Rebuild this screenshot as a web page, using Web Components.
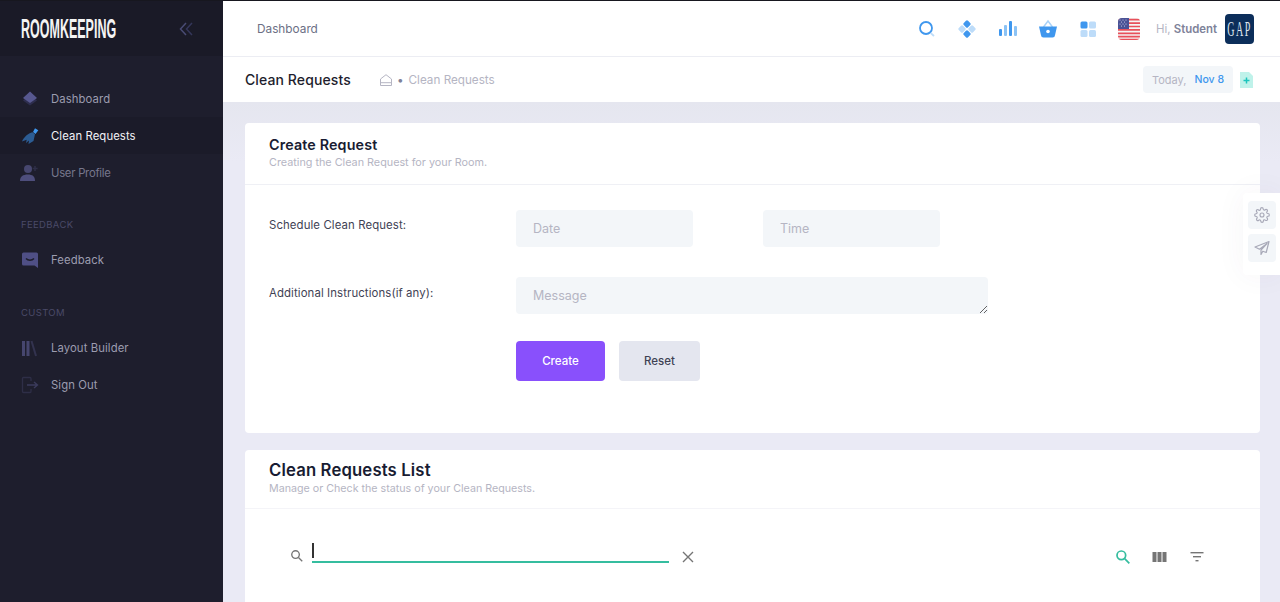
<!DOCTYPE html>
<html lang="en"><head><meta charset="utf-8"><title>Roomkeeping</title>
<style>
html,body{margin:0;height:602px;overflow:hidden;background:#e9e9f4}
body{font-family:"Inter","Open Sans",sans-serif;font-size:13px}
</style></head><body>
<rk-app>
  <rk-sidebar slot="side">
    <rk-nav-item label="Dashboard" icon="dash"></rk-nav-item>
    <rk-nav-item label="Clean Requests" icon="brush" active></rk-nav-item>
    <rk-nav-item label="User Profile" icon="user" dim style="letter-spacing:-.25px"></rk-nav-item>
    <rk-nav-section>FEEDBACK</rk-nav-section>
    <rk-nav-item label="Feedback" icon="chat"></rk-nav-item>
    <rk-nav-section style="padding-top:26px">CUSTOM</rk-nav-section>
    <rk-nav-item label="Layout Builder" icon="layout"></rk-nav-item>
    <rk-nav-item label="Sign Out" icon="out"></rk-nav-item>
  </rk-sidebar>
  <rk-topbar slot="top"></rk-topbar>
  <rk-subheader slot="top"></rk-subheader>
  <rk-card title="Create Request" sub="Creating the Clean Request for your Room." style="height:310px">
    <rk-form></rk-form>
  </rk-card>
  <rk-card title="Clean Requests List" sub="Manage or Check the status of your Clean Requests." big>
    <rk-table-toolbar></rk-table-toolbar>
  </rk-card>
  <rk-side-tools slot="over"></rk-side-tools>
</rk-app>
<script>
const F='"Inter","Open Sans",sans-serif';
function def(name,html,init){
  customElements.define(name,class extends HTMLElement{
    connectedCallback(){
      if(this.shadowRoot)return;
      const r=this.attachShadow({mode:'open'});
      r.innerHTML=typeof html==='function'?html(this):html;
      if(init)init(this,r);
    }
  });
}
def('rk-app',`<style>
:host{display:grid;grid-template-columns:223px 1fr;height:601px;border-top:1px solid #17171f;overflow:hidden;font-family:${F}}
.side{min-height:0}
.main{display:flex;flex-direction:column;min-width:0;overflow:hidden}
.content{flex:1;display:flex;flex-direction:column;gap:17px;padding:21px 20px 0 22px;background:linear-gradient(#e5e6ef,#eaeaf5 60px)}
</style>
<div class="side"><slot name="side"></slot></div>
<div class="main"><slot name="top"></slot><div class="content"><slot></slot></div></div>
<slot name="over"></slot>`);

def('rk-sidebar',`<style>
:host{display:block;height:100%;background:#1e1e2d;color:#a2a3b7}
.brand{height:55px;background:#1a1a27;display:flex;align-items:center;justify-content:space-between;padding:1px 30px 0 21px;box-sizing:border-box}
.logo{font:700 27px/1 "Liberation Sans",sans-serif;color:#f4f4f4;display:inline-block;transform:scale(.463,1.04);transform-origin:left center;width:95px;white-space:nowrap}
nav{padding-top:24px;display:block}
svg{flex:none}
</style>
<div class="brand"><span class="logo">ROOMKEEPING</span>
<svg width="14" height="14" viewBox="0 0 14 14" fill="none" stroke-width="1.5"><path d="M7 1 1.500 7 7 13" stroke="#494b74"/><path d="M13 1 7.500 7 13 13" stroke="#34365a"/></svg></div>
<nav><slot></slot></nav>`);

const icons={
dash:`<svg width="18" height="18" viewBox="0 0 18 18"><path d="M9 4.500 16 10.500 9 15.500 2 10.500Z" fill="#2e2e4e"/><path d="M9 1.500 16 8 9 13 2 8Z" fill="#57588f"/></svg>`,
brush:`<svg width="18" height="18" viewBox="0 0 18 18"><path d="M14 1.200 17.300 3.200 14.500 7 12 5Z" fill="#3f97ee"/><path d="M11.500 5.300 14 7.300 12.500 14 7.500 17 8 13.500 5 16 5.700 12.800 1 14.500C3 10 7 6.500 11.500 5.300Z" fill="#2c5c93"/></svg>`,
user:`<svg width="20" height="18" viewBox="0 0 20 18" style="margin-left:-2px"><circle cx="9" cy="5" r="4" fill="#47476f"/><path d="M1 17C1 12.500 4 10.500 8.800 10.500S16 12.500 16 17Z" fill="#4e4e7c"/><path d="M16 2v5M13.600 4.500h5" stroke="#2e2e47" stroke-width="1.600"/></svg>`,
chat:`<svg width="18" height="18" viewBox="0 0 18 18"><path d="M2.500 1.500h13a1.500 1.500 0 0 1 1.500 1.500v14l-3.500-2.500H2.500A1.500 1.500 0 0 1 1 13V3a1.500 1.500 0 0 1 1.500-1.500Z" fill="#4f4f85"/><path d="M5 7.500c2 2.300 6 2.300 8 0" stroke="#1e1e2d" stroke-width="1.400" fill="none"/></svg>`,
layout:`<svg width="18" height="18" viewBox="0 0 18 18"><rect x="1" y="2" width="3" height="15" fill="#46466e"/><rect x="5.500" y="2" width="3" height="15" fill="#46466e"/><path d="M10.500 2 15 17" stroke="#33334f" stroke-width="2"/></svg>`,
out:`<svg width="18" height="18" viewBox="0 0 18 18" fill="none"><path d="M10 5V2.500A1 1 0 0 0 9 1.500H2.500A1 1 0 0 0 1.500 2.500V15.500A1 1 0 0 0 2.500 16.500H9A1 1 0 0 0 10 15.500V13" stroke="#2e2e47" stroke-width="1.300"/><path d="M6 9H16M13 6l3.500 3-3.500 3" stroke="#3b3b5c" stroke-width="1.400"/></svg>`};

def('rk-nav-item',h=>`<style>
:host{display:flex;align-items:center;height:37px;padding-left:21px;font-size:11.300px;color:#9c9caf;letter-spacing:.1px}
:host([active]){background:#1b1b29;color:#f2f2f6}
:host([dim]){color:#77778c}
.i{width:30px;display:flex;align-items:center;line-height:0}
</style><span class="i">${icons[h.getAttribute('icon')]}</span><span>${h.getAttribute('label')}</span>`);

def('rk-nav-section',`<style>
:host{display:flex;align-items:center;height:16px;padding:25px 0 0 21px;margin-bottom:9px;font-size:9.500px;letter-spacing:.35px;color:#4a4a68}
</style><slot></slot>`);

const tb=(s)=>`<span class="tb">${s}</span>`;
def('rk-topbar',`<style>
:host{flex:none;display:flex;align-items:center;height:56px;box-sizing:border-box;background:#fff;border-bottom:1px solid #ecedf3;padding:0 26px 0 34px;color:#6c6f85;font-size:11.800px}
.sp{flex:1}
.tb{display:flex;justify-content:center;align-items:center;width:40.400px;line-height:0}
.hi{font-size:11.400px;color:#b5b5c3;margin:0 8px 0 7px}.hi b{color:#7e8299;font-weight:600}
.av{width:29px;height:30px;border-radius:4px;background:#0c2e5a;color:#dfe6ee;display:flex;align-items:center;justify-content:center;font:400 20px/1 "Liberation Serif",serif;letter-spacing:3px;overflow:hidden}
.av span{display:inline-block;transform:scaleX(.5)}
</style>
<span>Dashboard</span><span class="sp"></span>
${tb(`<svg width="18" height="18" viewBox="0 0 18 18" fill="none"><circle cx="8" cy="8" r="6" stroke="#3f97ee" stroke-width="1.800"/><path d="M12.500 12.800 16 16" stroke="#bddcf9" stroke-width="1.800"/></svg>`)}
${tb(`<svg width="18" height="18" viewBox="0 0 18 18"><rect x="6" y="1" width="6" height="6" rx="1.500" transform="rotate(45 9 4)" fill="#3f97ee"/><rect x="6" y="11" width="6" height="6" rx="1.500" transform="rotate(45 9 14)" fill="#3f97ee"/><rect x="1" y="6" width="6" height="6" rx="1.500" transform="rotate(45 4 9)" fill="#bddcf9"/><rect x="11" y="6" width="6" height="6" rx="1.500" transform="rotate(45 14 9)" fill="#bddcf9"/></svg>`)}
${tb(`<svg width="18" height="18" viewBox="0 0 18 18"><rect x="0" y="9" width="3" height="7" rx="1" fill="#3f97ee"/><rect x="5" y="5" width="3" height="11" rx="1" fill="#8cc3f5"/><rect x="10" y="1" width="3" height="15" rx="1" fill="#3f97ee"/><rect x="15" y="6" width="3" height="10" rx="1" fill="#8cc3f5"/></svg>`)}
${tb(`<svg width="20" height="20" viewBox="0 0 20 20"><path d="M5.500 8 10 2 14.500 8" fill="none" stroke="#a9d2f8" stroke-width="1.500"/><path d="M1 7.500h18l-2 8.700a2.500 2.500 0 0 1-2.400 2.300H5.400A2.500 2.500 0 0 1 3 16.200Z" fill="#3f97ee"/><circle cx="10" cy="12.500" r="1.800" fill="#fff"/></svg>`)}
${tb(`<svg width="16" height="16" viewBox="0 0 16 16"><rect x="0.500" y="0.500" width="7" height="7" rx="1.500" fill="#3f97ee"/><rect x="9" y="0.500" width="7" height="7" rx="1.500" fill="#bddcf9"/><rect x="0.500" y="9" width="7" height="7" rx="1.500" fill="#bddcf9"/><rect x="9" y="9" width="7" height="7" rx="1.500" fill="#bddcf9"/></svg>`)}
${tb(`<svg width="22" height="22" viewBox="0 0 22 22"><defs><clipPath id="f"><rect width="22" height="22" rx="4"/></clipPath></defs><g clip-path="url(#f)"><rect width="22" height="22" fill="#f5f5f5"/><path d="M0 1.700h22M0 5.100h22M0 8.500h22M0 11.900h22M0 15.300h22M0 18.700h22" stroke="#e8505b" stroke-width="1.700"/><path d="M0 21.500h22" stroke="#e8505b" stroke-width="1.500"/><rect width="11" height="11" fill="#4a5296"/><path d="M2 2h.01M5 2h.01M8 2h.01M3.500 4h.01M6.500 4h.01M2 6h.01M5 6h.01M8 6h.01M3.500 8h.01M6.500 8h.01" stroke="#cfd2ea" stroke-width="1.200" stroke-linecap="round"/></g></svg>`)}
<span class="hi">Hi, <b>Student</b></span>
<span class="av"><span>GAP</span></span>`);

def('rk-subheader',`<style>
:host{flex:none;display:flex;align-items:center;height:45px;box-sizing:border-box;background:#fff;padding:0 27px 0 22px;color:#b5b5c3}
h2{margin:0;font-size:14px;font-weight:500;color:#1e1e2d;width:135px;letter-spacing:.1px}
.crumb{display:flex;align-items:center;gap:5px;font-size:11.700px}
.sp{flex:1}
.today{display:flex;gap:8px;align-items:center;height:27px;padding:0 9px;background:#f3f6f9;border-radius:4px;font-size:11px;color:#b5b5c3;margin-right:7px}
.today b{font-weight:500;font-size:10.500px;color:#3f97ee}
svg{display:block}
</style>
<h2>Clean Requests</h2>
<span class="crumb"><svg width="12" height="12" viewBox="0 0 12 12" fill="none" stroke="#b5b5c3"><path d="M.5 11.500V5L6 .7 11.500 5V11.500ZM.5 8.700H11.500"/></svg><span style="color:#7e8299">•</span><span>Clean Requests</span></span>
<span class="sp"></span>
<span class="today"><span>Today,</span><b>Nov 8</b></span>
<svg width="13" height="16" viewBox="0 0 13 16"><path d="M0 0H9L13 4V16H0Z" fill="#bff2ea"/><path d="M6.500 5.500v6M3.500 8.500h6" stroke="#1bc5bd" stroke-width="1.500"/></svg>`);

def('rk-card',h=>`<style>
:host{display:flex;flex-direction:column;background:#fff;border-radius:4px;box-sizing:border-box;flex:none}
header{height:62px;box-sizing:border-box;border-bottom:1px solid #eff0f5;padding:13px 24px 0}
:host([big]) header{height:59px;padding-top:11px;border-bottom-color:#f4f4f8}
h3{margin:0;font-size:14.300px;line-height:17px;font-weight:600;color:#181c32;letter-spacing:.15px}
:host([big]) h3{font-size:16.700px;line-height:19px}
p{margin:3px 0 0;font-size:10.800px;line-height:14px;color:#b5b5c3}
:host([big]) p{margin-top:2px;font-size:10.700px}
</style><header><h3>${h.getAttribute('title')}</h3><p>${h.getAttribute('sub')}</p></header><slot></slot>`);

def('rk-form',`<style>
:host{display:grid;grid-template-columns:247px 177px 70px 177px 48px;grid-auto-rows:min-content;padding:25px 0 0 24px;font-size:11.400px;color:#3f4254;align-content:start}
label{line-height:30px;letter-spacing:.1px}
label.l2{line-height:32px}
.f{height:37px;box-sizing:border-box;background:#f3f6f9;border:0;border-radius:4px;padding:0 17px;font:12.500px ${F};color:#3f4254;width:100%;outline:0;display:block}
.f::placeholder{color:#b5b5c3;opacity:1}
textarea.f{height:37px;padding-top:10px;line-height:17px;resize:vertical;grid-column:2/6}
.r{margin-bottom:30px}
.btns{grid-column:2/6;display:flex;gap:14px;margin-top:27px}
button{height:40px;border:0;border-radius:4px;font:500 11.500px ${F};cursor:pointer}
.c{width:89px;background:#8950fc;color:#fff}
.x{width:81px;background:#e4e6ef;color:#3f4254}
</style>
<label>Schedule Clean Request:</label>
<input class="f r" placeholder="Date"><span></span><input class="f r" placeholder="Time"><span></span>
<label class="l2">Additional Instructions(if any):</label>
<textarea class="f" placeholder="Message"></textarea>
<span></span><div class="btns"><button class="c">Create</button><button class="x">Reset</button></div>`);

def('rk-table-toolbar',`<style>
:host{display:flex;align-items:center;height:96px;padding:0 45px 0 45px;box-sizing:border-box}
svg{display:block;flex:none}
.ic{position:relative;top:-1px}
.inp{position:relative;width:357px;height:26px;border-bottom:2px solid #35bd9f;margin:0 12px 0 8px;box-sizing:border-box;top:-7px}
.caret{display:block;position:absolute;left:0;top:6px;width:2px;height:15px;background:#333}
.sp{flex:1}
.t{width:37px;display:flex;justify-content:center}
</style>
<svg class="ic" width="14" height="14" viewBox="0 0 24 24" fill="none" stroke="#757575" stroke-width="2.300"><circle cx="9.500" cy="9.500" r="6.500"/><path d="m14.500 14.500 6.500 6.500"/></svg>
<div class="inp"><span class="caret"></span></div>
<svg width="14" height="14" viewBox="0 0 14 14" stroke="#757575" stroke-width="1.400"><path d="M2 2 12 12M12 2 2 12"/></svg>
<span class="sp"></span>
<span class="t"><svg width="16" height="16" viewBox="0 0 24 24" fill="none" stroke="#35bd9f" stroke-width="2.600"><circle cx="9.500" cy="9.500" r="6.500"/><path d="m14.500 14.500 7 7"/></svg></span>
<span class="t"><svg width="15" height="12" viewBox="0 0 15 12" fill="#757575"><rect x="0.500" y="1" width="4" height="10"/><rect x="5.500" y="1" width="4" height="10"/><rect x="10.500" y="1" width="4" height="10"/></svg></span>
<span class="t"><svg width="14" height="12" viewBox="0 0 14 12" fill="#757575"><rect x="0.500" y="1" width="13" height="1.400"/><rect x="3" y="5" width="8" height="1.400"/><rect x="5.500" y="9" width="3" height="1.400"/></svg></span>`);

def('rk-side-tools',`<style>
:host{position:absolute;right:0;top:193px;width:37px;height:82px;background:#fff;border-radius:4px 0 0 4px;display:flex;flex-direction:column;align-items:center;gap:5px;padding-top:8px;box-sizing:border-box;box-shadow:0 0 30px rgba(82,63,105,.05)}
.b{width:28px;height:28px;border-radius:4px;background:#f3f6f9;display:flex;align-items:center;justify-content:center}
</style>
<span class="b"><svg width="16" height="16" viewBox="0 0 24 24" fill="none" stroke="#a8a9b8" stroke-width="1.700"><circle cx="12" cy="12" r="3"/><path d="M19.400 15a1.650 1.650 0 0 0 .33 1.820l.06.06a2 2 0 1 1-2.830 2.830l-.06-.06a1.650 1.650 0 0 0-2.800 1.170V21a2 2 0 1 1-4 0v-.09a1.650 1.650 0 0 0-2.850-1.110l-.06.06a2 2 0 1 1-2.830-2.830l.06-.06a1.650 1.650 0 0 0-1.170-2.800H3a2 2 0 1 1 0-4h.09a1.650 1.650 0 0 0 1.110-2.850l-.06-.06a2 2 0 1 1 2.830-2.830l.06.06a1.650 1.650 0 0 0 2.800-1.170V3a2 2 0 1 1 4 0v.09a1.650 1.650 0 0 0 2.850 1.110l.06-.06a2 2 0 1 1 2.830 2.830l-.06.06a1.650 1.650 0 0 0 1.170 2.800H21a2 2 0 1 1 0 4h-.09a1.650 1.650 0 0 0-1.510 1Z"/></svg></span>
<span class="b"><svg width="16" height="16" viewBox="0 0 16 16" fill="none" stroke="#a8a9b8" stroke-width="1.200" stroke-linejoin="round"><path d="M15 1.500 1 7l4.500 2.200L13 3.500 7 10v4.500l1.800-3.300 3.400 1.300Z"/></svg></span>`);
</script>
</body></html>
